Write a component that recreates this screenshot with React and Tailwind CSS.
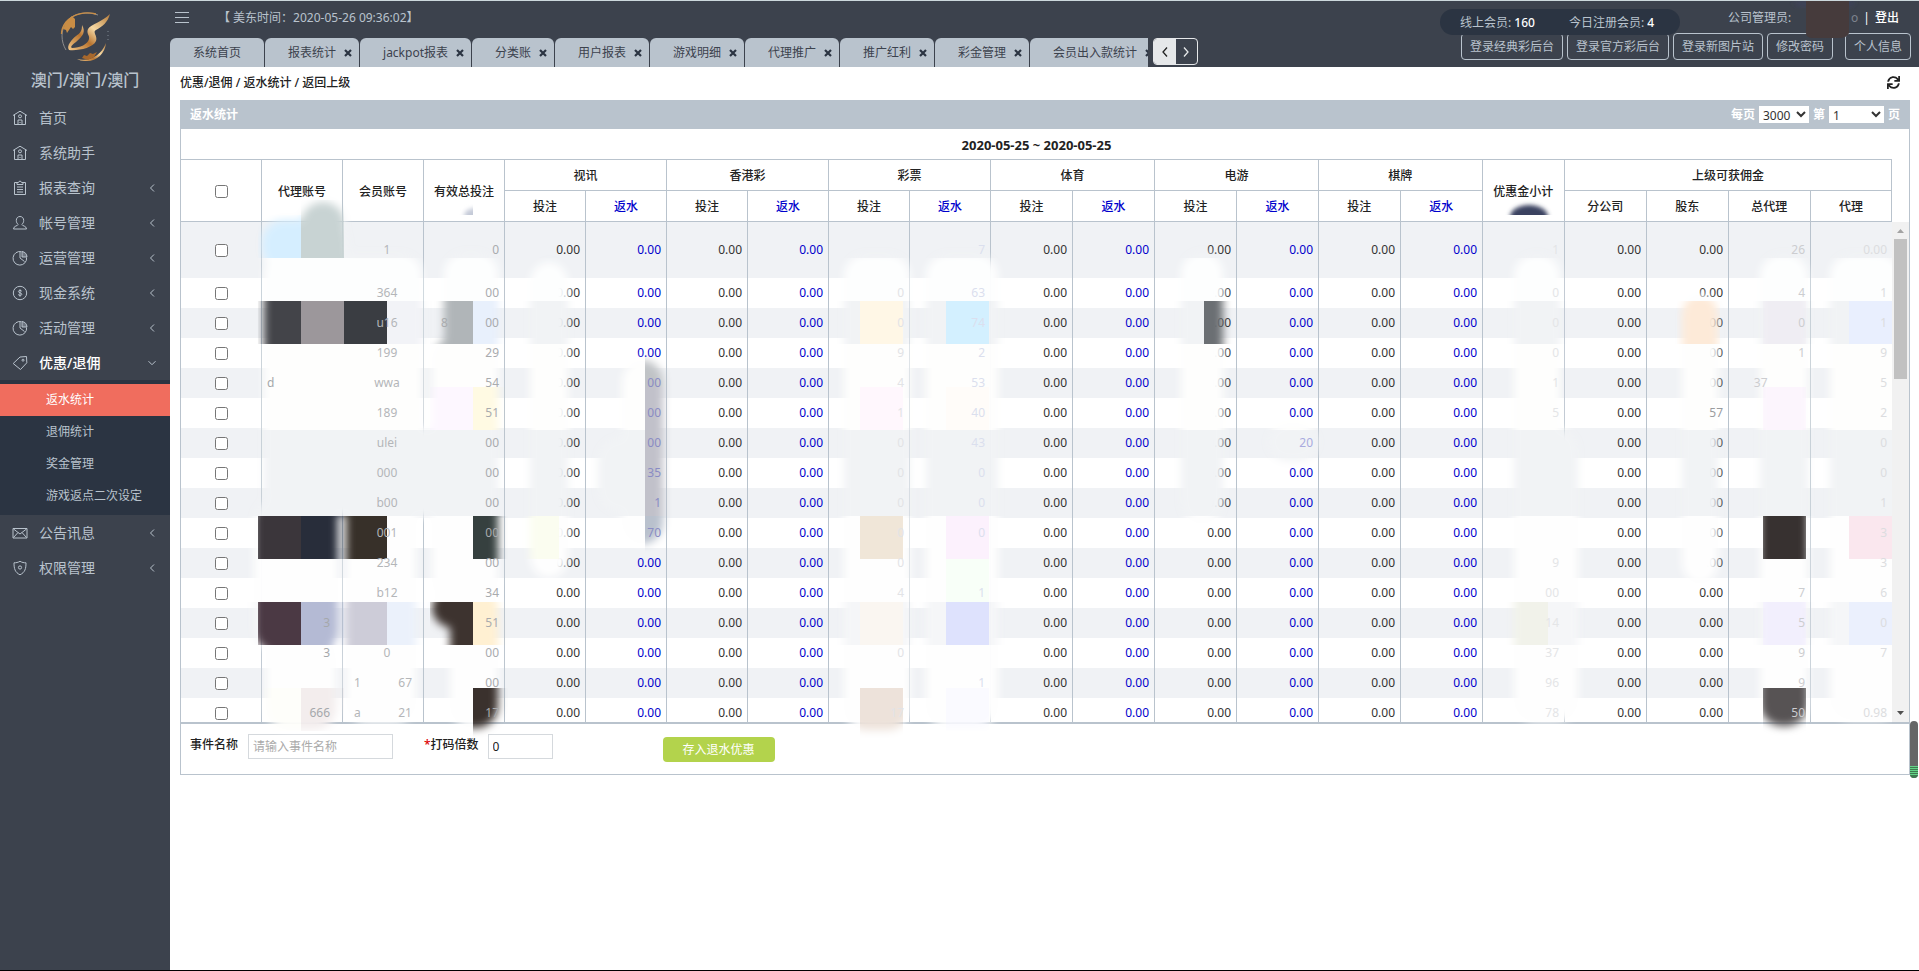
import React from "react";
import { FaSync } from "react-icons/fa";

/* ---------- icons ---------- */
const iconPaths = {
  home: (
    <>
      <path d="M1 5.5 8 1.2l7 4.3" />
      <path d="M2.5 5v9.5h11V5" />
      <circle cx="8" cy="6.3" r="1.5" />
      <path d="M6 14.5V10h4v4.5M8 12v1" />
    </>
  ),
  report: (
    <>
      <path d="M5 2.5H2.5v12h11v-12H11" />
      <path d="M5 4.5v-2h1.5c0-1.8 3-1.8 3 0H11v2z" />
      <path d="M5 7h6M5 9.5h6M5 12h6" />
    </>
  ),
  user: (
    <path d="M8 1.5c-2.3 0-3.7 1.7-3.7 4 0 1.700.8 3.200 1.900 4-.2 1.500-4.700 1.200-4.700 4.500h13c0-3.300-4.500-3-4.700-4.500 1.100-.8 1.900-2.300 1.900-4 0-2.300-1.400-4-3.700-4z" />
  ),
  pie: (
    <>
      <path d="M9.500 1.700A6.800 6.800 0 1 0 14.600 7.500" />
      <path d="M8 2v6l4.500 3.500" />
      <path d="M10 1.500V7h5A6 6 0 0 0 10 1.500z" fill="currentColor" fillOpacity="0.4" />
    </>
  ),
  cash: (
    <>
      <circle cx="8" cy="8" r="6.700" />
      <path d="M9.800 6.300c-.6-1.300-3.400-1.200-3.400.2 0 1.700 3.400 1 3.400 2.800 0 1.500-3 1.500-3.600.2M8 4.300v7.400" />
    </>
  ),
  tag: (
    <>
      <path d="M1.200 8.500 8 2l6.500-.5.3 6.300-6.300 6.700z" />
      <circle cx="11" cy="5.200" r="1" />
    </>
  ),
  mail: (
    <>
      <path d="M1 3.500h14v9.500H1z" />
      <path d="m1.500 4 6.500 5 6.500-5M1.500 12.500l4.500-5M14.500 12.500 10 7.500" />
    </>
  ),
  shield: (
    <>
      <path d="M8 1.300c2 1.200 4 1.500 6 1.500 0 6-1 9.500-6 12-5-2.500-6-6-6-12 2 0 4-.3 6-1.500z" />
      <circle cx="8" cy="7.500" r="1.600" />
    </>
  ),
};

function NavIcon({ name }) {
  return (
    <svg viewBox="0 0 16 16" className="size-4 shrink-0" fill="none" stroke="currentColor" strokeWidth="1" aria-hidden="true">
      {iconPaths[name]}
    </svg>
  );
}

function Chevron({ open }) {
  return (
    <svg viewBox="0 0 8 8" className="ml-auto size-2" fill="none" stroke="currentColor" aria-hidden="true">
      {open ? <path d="m.5 2.200 3.500 3.500 3.500-3.500" /> : <path d="M6 .5 2.500 4 6 7.500" />}
    </svg>
  );
}

function Logo() {
  return (
    <svg viewBox="0 0 50 50" className="mx-auto size-[50px]" aria-hidden="true">
      <defs>
        <linearGradient id="gold" x1="0" y1="1" x2="1" y2="0">
          <stop offset="0" stopColor="#f3c98a" />
          <stop offset="0.35" stopColor="#b8742f" />
          <stop offset="0.6" stopColor="#f6d9a4" />
          <stop offset="1" stopColor="#b57a38" />
        </linearGradient>
      </defs>
      <path d="M38 3C27-1 14 1 7 9 0 18 1 30 6 38" fill="none" stroke="#8d8c8c" strokeWidth="1" />
      <path d="M36 2C25-1 13 2 6 10 3 14 1.500 19 1.500 22" fill="none" stroke="#c98d45" strokeWidth="1.300" />
      <path d="M3 17 6 10l6-6 3 3v8l-2 2-2-2-2 3-2 3-1-3z" fill="#c98d45" />
      <path d="M17 47c12 3 24-3 29-16-1 11-10 19-21 18-3 0-6-1-8-2z" fill="url(#gold)" />
      <path d="m22 46 2-3 3 1 3-3 3 1 4-2-3 5-6 3z" fill="#a8682c" />
      <path
        d="M22 13c4 7 1 11-6 17-4 3-6 5-4 6 8 0 16-4 17-9 1-4-3-5-1-10 3-5 14-7 22-15-2 8-8 13-14 16-4 2 2 6 0 11-3 7-18 10-27 9-3-4 3-11 7-14 5-3 6-6 6-11z"
        fill="url(#gold)"
      />
      <path d="M48 19v12" stroke="#7f8893" strokeWidth="1" strokeDasharray="1 3" />
    </svg>
  );
}

/* ---------- navigation ---------- */
const navTop = [
  { label: "首页", icon: "home" },
  { label: "系统助手", icon: "home" },
  { label: "报表查询", icon: "report", more: true },
  { label: "帐号管理", icon: "user", more: true },
  { label: "运营管理", icon: "pie", more: true },
  { label: "现金系统", icon: "cash", more: true },
  { label: "活动管理", icon: "pie", more: true },
  { label: "优惠/退佣", icon: "tag", more: true, open: true },
];
const navBottom = [
  { label: "公告讯息", icon: "mail", more: true },
  { label: "权限管理", icon: "shield", more: true },
];
const subNav = ["返水统计", "退佣统计", "奖金管理", "游戏返点二次设定"];

function NavItem({ item }) {
  return (
    <a href="#" className="flex h-[35px] items-center gap-[11px] pr-[14px] pl-3 text-sm">
      <NavIcon name={item.icon} />
      <span className={item.open ? "font-medium text-white" : ""}>{item.label}</span>
      {item.more && <Chevron open={item.open} />}
    </a>
  );
}

function Sidebar() {
  return (
    <aside className="w-[170px] shrink-0 bg-[#3c424d] text-[#b9c3cd]">
      <div className="h-[99px] pt-[11px]">
        <Logo />
        <div className="mt-[6px] text-center text-base leading-6 font-medium">澳门/澳门/澳门</div>
      </div>
      <nav>
        {navTop.map((n) => (
          <NavItem key={n.label} item={n} />
        ))}
        <div className="bg-[#2b3442] pt-1 pb-[3px] text-xs">
          {subNav.map((s, i) => (
            <a
              key={s}
              href="#"
              className={"flex h-8 items-center pl-[46px] " + (i === 0 ? "bg-[#f06d5e] text-white" : "")}
            >
              {s}
            </a>
          ))}
        </div>
        {navBottom.map((n) => (
          <NavItem key={n.label} item={n} />
        ))}
      </nav>
    </aside>
  );
}

/* ---------- header ---------- */
const tabs = ["系统首页", "报表统计", "jackpot报表", "分类账", "用户报表", "游戏明细", "代理推广", "推广红利", "彩金管理", "会员出入款统计"];

function Tab({ label, closable }) {
  return (
    <div className="mr-px flex h-[29px] shrink-0 items-center gap-2 rounded-t-md bg-[#b9c3cd] pr-[7px] pl-[23px] text-[#3c424d]">
      <a href="#" className={closable ? "" : "pr-4"}>
        {label}
      </a>
      {closable && (
        <button type="button" aria-label={"关闭" + label}>
          <svg viewBox="0 0 8 8" className="size-2" stroke="#2b3442" strokeWidth="2.200" aria-hidden="true">
            <path d="m1 1 6 6M7 1 1 7" />
          </svg>
        </button>
      )}
    </div>
  );
}

function HeaderButton({ children }) {
  return (
    <button type="button" className="h-[27px] rounded-[4px] border border-[#b9c3cd] px-2">
      {children}
    </button>
  );
}

function Header() {
  return (
    <header className="relative flex h-[66px] justify-between bg-[#3c424d] text-xs text-[#b9c3cd]">
      <div className="flex min-w-0 flex-col justify-between">
        <div className="flex h-[37px] items-center pb-1 pl-[5px]">
          <button type="button" aria-label="菜单" className="mr-[29px]">
            <svg viewBox="0 0 14 13" className="h-[13px] w-[14px]" stroke="currentColor" aria-hidden="true">
              <path d="M0 1.500h14M0 6.500h14M0 11.500h14" />
            </svg>
          </button>
          <span>【 美东时间：2020-05-26 09:36:02】</span>
        </div>
        <div className="flex gap-[5px]">
          <div className="flex w-[978px] overflow-hidden">
            {tabs.map((t, i) => (
              <Tab key={t} label={t} closable={i > 0} />
            ))}
          </div>
          <div className="flex h-[27px] w-[45px] overflow-hidden rounded-[4px] border border-[#e6e8ea]">
            <button type="button" aria-label="向左" className="flex flex-1 items-center justify-center bg-[#e6e8ea] text-[#222]">
              <svg viewBox="0 0 6 10" className="h-[10px] w-[6px]" fill="none" stroke="currentColor" strokeWidth="1.300" aria-hidden="true">
                <path d="M5 .5 1 5l4 4.500" />
              </svg>
            </button>
            <button type="button" aria-label="向右" className="flex flex-1 items-center justify-center text-[#e6e8ea]">
              <svg viewBox="0 0 6 10" className="h-[10px] w-[6px]" fill="none" stroke="currentColor" strokeWidth="1.300" aria-hidden="true">
                <path d="m1 .5 4 4.500-4 4.500" />
              </svg>
            </button>
          </div>
        </div>
      </div>
      <div className="flex flex-col items-end pr-2">
        <div className="flex h-8 items-center gap-[5px] pt-px pr-3">
          <span className="pr-[55px]">公司管理员:</span>
          <span className="text-[#7d838d]">o</span>
          <span className="text-white">|</span>
          <a href="#" className="font-medium text-white">
            登出
          </a>
        </div>
        <div className="flex gap-1">
          <HeaderButton>登录经典彩后台</HeaderButton>
          <HeaderButton>登录官方彩后台</HeaderButton>
          <HeaderButton>登录新图片站</HeaderButton>
          <HeaderButton>修改密码</HeaderButton>
          <span className="w-1" />
          <HeaderButton>个人信息</HeaderButton>
        </div>
      </div>
      <div className="absolute top-2 right-[239px] flex h-[26px] w-60 items-center gap-[34px] rounded-full bg-[#2b3442] pt-[2px] pl-5">
        <span>
          线上会员: <b className="font-medium text-white">160</b>
        </span>
        <span>
          今日注册会员: <b className="font-medium text-white">4</b>
        </span>
      </div>
      <svg className="absolute top-0 right-[60px] h-10 w-[70px]" viewBox="0 0 70 40" aria-hidden="true">
        <defs>
          <filter id="soft" x="-20%" y="-20%" width="140%" height="140%">
            <feGaussianBlur stdDeviation="2" />
          </filter>
        </defs>
        <path d="M3 0h64l-5 6H10z" fill="#3d4258" filter="url(#soft)" />
        <path d="M17 0h43v32q-2 5-10 5H24q-7 0-7-5z" fill="#463b3c" />
      </svg>
    </header>
  );
}

/* ---------- table ---------- */
const games = ["视讯", "香港彩", "彩票", "体育", "电游", "棋牌"];
const blueCols = [5, 7, 9, 11, 13, 15];

/* Values that differ from 0.00, by column */
const gap = "\u00a0".repeat(12);
const columns = {
  1: ["", "", "", "", "d", "", "", "", "", "", "", "", "3", "3", "", "666"],
  2: ["1", "364", "u16", "199", "wwa", "189", "ulei", "000", "b00", "001", "234", "b12", "", "0", "1" + gap + "67", "a" + gap + "21"],
  3: ["0", "00", "8" + gap + "00", "29", "54", "51", "00", "00", "00", "00", "00", "34", "51", "00", "00", "17"],
  5: [, , , , "00", "00", "00", "35", "1", "70"],
  8: ["", "0", "0", "9", "4", "1", "0", "0", "0", "0", "0", "4", "", "0", "", "17"],
  9: ["7", "63", "74", "2", "53", "40", "43", "0", "0", "0", "", "1", "", "", "1", ""],
  13: [, , , , , , "20"],
  16: ["1", "0", "0", "0", "1", "5", "", "", "", "", "9", "00", "14", "37", "96", "78"],
  18: [, , , , , "57"],
  19: ["26", "4", "0", "1", "37" + gap, "", "", "", "", "", "", "7", "5", "9", "9", "50"],
  20: ["0.00", "1", "1", "9", "5", "2", "0", "0", "1", "3", "3", "6", "0", "7", "", "0.98"],
};
const fragmentTone = {
  1: "text-[#a5a8ab]",
  2: "text-[#b4b6b9]",
  3: "text-[#a9abae]",
  5: "text-[#8a8cc4]",
  8: "text-[#e2e3e6]",
  9: "text-[#dbdfee]",
  13: "text-[#a9abdf]",
  16: "text-[#e4e5e7]",
  18: "text-[#9a9c9f]",
  19: "text-[#cccdd0]",
  20: "text-[#dcdde0]",
};

function cellAlign(row, col) {
  if (col === 1) return row > 10 ? "pr-3 text-right" : "pl-[5px] text-left";
  if (col === 2) return row < 14 ? "pl-2 text-center" : "text-center";
  return "px-[5px] text-right";
}

function Cols() {
  return (
    <colgroup>
      {Array.from({ length: 21 }, (_, i) => (
        <col key={i} className={i < 10 || i === 20 ? "w-[81px]" : ""} />
      ))}
    </colgroup>
  );
}

const thBase = "border-r border-b border-[#b9c3cd] px-0 pt-[2px] pb-0 font-medium";

function HeadTable() {
  return (
    <table className="w-full table-fixed border-separate border-spacing-0 text-center text-[#222]">
      <Cols />
      <thead>
        <tr className="h-[31px]">
          <th colSpan={21} className="border-b border-[#b9c3cd] px-0 pt-[2px] pb-0 text-[13px] leading-4 font-bold">
            2020-05-25 ~ 2020-05-25
          </th>
        </tr>
        <tr className="h-[31px]">
          <th rowSpan={2} className={thBase}>
            <input type="checkbox" aria-label="全选" className="mx-auto block size-[13px]" />
          </th>
          <th rowSpan={2} className={thBase}>代理账号</th>
          <th rowSpan={2} className={thBase}>会员账号</th>
          <th rowSpan={2} className={thBase}>有效总投注</th>
          {games.map((g) => (
            <th key={g} colSpan={2} className={thBase}>{g}</th>
          ))}
          <th rowSpan={2} className={thBase}>优惠金小计</th>
          <th colSpan={4} className={thBase}>上级可获佣金</th>
        </tr>
        <tr className="h-[31px]">
          {games.map((g) => (
            <React.Fragment key={g}>
              <th className={thBase}>投注</th>
              <th className={thBase + " text-[#0000cc]"}>返水</th>
            </React.Fragment>
          ))}
          {["分公司", "股东", "总代理", "代理"].map((t) => (
            <th key={t} className={thBase}>{t}</th>
          ))}
        </tr>
      </thead>
    </table>
  );
}

function BodyCell({ row, col }) {
  const own = columns[col] ? columns[col][row] : undefined;
  const tone = blueCols.includes(col) ? "text-[#0000cc]" : "text-[#333]";
  return (
    <td className={"border-r border-[#b9c3cd] py-0 whitespace-nowrap last:border-r-0 " + cellAlign(row, col) + " " + tone}>
      {own === undefined ? "0.00" : <span className={"relative z-10 " + fragmentTone[col]}>{own}</span>}
    </td>
  );
}

function BodyTable() {
  return (
    <table className="w-full table-fixed border-separate border-spacing-0">
      <Cols />
      <tbody>
        {Array.from({ length: 16 }, (_, r) => (
          <tr key={r} className={(r === 0 ? "h-14" : "h-[30px]") + (r % 2 === 0 ? " bg-[#f0f2f5]" : " bg-white")}>
            <td className="border-r border-[#b9c3cd] p-0">
              <input type="checkbox" aria-label={"选择第" + (r + 1) + "行"} className="mx-auto block size-[13px]" />
            </td>
            {Array.from({ length: 20 }, (_, c) => (
              <BodyCell key={c} row={r} col={c + 1} />
            ))}
          </tr>
        ))}
      </tbody>
    </table>
  );
}

/* Painted-over mosaic: soft brush strokes reveal 43px blocks */
const strokes = [
  [264, 222, 82, 46], [303, 204, 40, 60], [266, 255, 154, 258], [256, 500, 80, 150], [268, 640, 66, 88],
  [348, 500, 66, 222], [400, 430, 60, 85], [446, 254, 50, 120], [434, 340, 62, 260], [434, 590, 62, 36],
  [452, 600, 44, 126], [532, 264, 34, 312], [600, 440, 60, 70], [624, 362, 37, 180],
  [846, 256, 62, 472], [928, 256, 68, 470], [1183, 254, 38, 268], [1270, 425, 46, 34],
  [1516, 256, 42, 250], [1516, 430, 60, 290], [1684, 296, 32, 286], [1762, 256, 44, 468],
  [1832, 256, 66, 462],
];
const bands = [
  [172, 86, "#f1f3f5"], [258, 43, "#fdfefe"], [301, 43, "#f1f3f5"], [344, 86, "#fefefd"], [430, 86, "#f1f3f5"],
  [516, 86, "#fefefe"], [602, 43, "#f5f6f8"], [645, 95, "#fefefe"],
];
const blocks = [
  [258, 215, "#d5eeff"], [301, 200, "#c8d3d3", 58],
  [258, 301, "#434449"], [301, 301, "#9c979b"], [344, 301, "#3a3d42"], [387, 301, "#f2f3f7"], [430, 301, "#b0b5b8"], [473, 301, "#e8f0fc"],
  [430, 387, "#fdf7ff"], [473, 387, "#fffae3"],
  [258, 516, "#3b363b"], [301, 516, "#282d3a"], [344, 516, "#373029"], [473, 516, "#36403f"], [516, 516, "#fbfdf0"],
  [258, 602, "#4b3944"], [301, 602, "#b4bad4"], [344, 602, "#cdccd8"], [387, 602, "#ebf1fb"], [430, 602, "#3d332f"], [473, 602, "#fff0d2"],
  [258, 688, "#fefefa"], [301, 688, "#f3eded"], [473, 688, "#3a312d", 50],
  [645, 344, "#c0c3c6"], [645, 387, "#c1c1ca", 129], [645, 516, "#b9c1cd"],
  [860, 301, "#fff7e6"], [860, 387, "#fff7fd"], [860, 516, "#f0e6d8"], [860, 602, "#faf6f1"], [860, 688, "#ede2da", 50],
  [946, 301, "#d3f0ff"], [946, 387, "#fffcf9"], [946, 516, "#fcf1fd"], [946, 559, "#f8fff8"], [946, 602, "#dee2fd"], [946, 688, "#fafaff"],
  [1204, 301, "#6b6f73"], [1505, 602, "#f1f2ea"], [1677, 301, "#fdead8"],
  [1763, 301, "#efedf3"], [1763, 387, "#fcf5fd"], [1763, 516, "#373130"], [1763, 602, "#f2effd"], [1763, 688, "#575354", 50],
  [1849, 301, "#e9effe"], [1849, 516, "#fae7ee"], [1849, 602, "#ebf0fd"],
];

function Mosaic() {
  return (
    <svg
      className="pointer-events-none absolute top-0 left-0 h-[646px] w-[1711px]"
      viewBox="181 129 1711 646"
      aria-hidden="true"
    >
      <defs>
        <filter id="brush" filterUnits="userSpaceOnUse" x="181" y="129" width="1740" height="646">
          <feGaussianBlur stdDeviation="4" />
        </filter>
        <mask id="strokes" maskUnits="userSpaceOnUse" x="181" y="129" width="1740" height="646">
          <g filter="url(#brush)" fill="#fff">
            {strokes.map(([x, y, w, h], i) => (
              <rect key={i} x={x - 2} y={y - 2} width={w + 4} height={h + 4} rx="22" />
            ))}
          </g>
        </mask>
      </defs>
      <g mask="url(#strokes)">
        {bands.map(([y, h, c]) => (
          <rect key={y} x="181" y={y} width="1711" height={h} fill={c} />
        ))}
        {blocks.map(([x, y, c, h], i) => (
          <rect key={i} x={x} y={y} width="43" height={h || 43} fill={c} />
        ))}
      </g>
      <svg x="1500" y="195" width="60" height="20" viewBox="0 0 60 20">
        <ellipse cx="29" cy="22" rx="19" ry="12" fill="#3b4260" filter="url(#soft)" />
      </svg>
      <svg x="456" y="200" width="17" height="15" viewBox="0 0 17 15">
        <ellipse cx="20" cy="16" rx="12" ry="8" fill="#c5cad8" filter="url(#soft)" />
      </svg>
    </svg>
  );
}

function ScrollTrack() {
  return (
    <div className="flex w-[17px] shrink-0 flex-col items-center bg-[#f1f1f1]">
      <svg viewBox="0 0 17 17" className="size-[17px]" fill="#a3a3a3" aria-hidden="true">
        <path d="m5 11 3.500-4 3.500 4z" />
      </svg>
      <div className="h-[140px] w-[13px] bg-[#c1c1c1]" />
      <svg viewBox="0 0 17 17" className="mt-auto size-[17px]" fill="#505050" aria-hidden="true">
        <path d="m5 6 3.500 4L12 6z" />
      </svg>
    </div>
  );
}

function Panel() {
  return (
    <section className="mr-[9px] ml-[10px] border border-t-0 border-[#b9c3cd] text-xs">
      <div className="-mx-px flex h-[29px] items-center justify-between bg-[#b9c3cd] px-[10px] font-bold text-white">
        <h2>返水统计</h2>
        <div className="flex items-center gap-1">
          <label htmlFor="size">每页</label>
          <select id="size" className="h-[17px] w-[50px] bg-white font-normal text-[#333]">
            <option>3000</option>
          </select>
          <label htmlFor="page">第</label>
          <select id="page" className="h-[17px] w-[55px] bg-white font-normal text-[#333]">
            <option>1</option>
          </select>
          <span>页</span>
        </div>
      </div>
      <div className="relative">
        <div className="pr-[17px]">
          <HeadTable />
        </div>
        <div className="flex h-[500px] overflow-hidden">
          <div className="min-w-0 flex-1">
            <BodyTable />
          </div>
          <ScrollTrack />
        </div>
        <div className="h-[2px] bg-[#b9c3cd]" />
        <Mosaic />
      </div>
      <form className="flex h-[50px] items-start pt-[10px] pl-[9px] text-[#222]">
        <label htmlFor="event" className="mr-[10px] leading-[22px] font-medium">事件名称</label>
        <input
          id="event"
          placeholder="请输入事件名称"
          className="mr-[31px] h-[25px] w-[145px] border border-[#d5d9dd] px-1 placeholder:text-[#aaa]"
        />
        <label htmlFor="times" className="mr-[9px] leading-[22px] font-medium">
          <span className="text-[#d00]">*</span>打码倍数
        </label>
        <input id="times" defaultValue="0" className="h-[25px] w-[65px] border border-[#d5d9dd] px-1" />
        <button type="button" className="mt-[3px] ml-[110px] h-[25px] w-28 rounded-[4px] bg-[#b3d34c] text-white">
          存入退水优惠
        </button>
      </form>
    </section>
  );
}

export default function App() {
  return (
    <div className="relative flex min-h-screen border-t border-b border-t-[#ccd8dc] border-b-black bg-white font-['Noto_Sans','Noto_Sans_CJK_SC',sans-serif]">
      <Sidebar />
      <main className="min-w-0 flex-1">
        <Header />
        <div className="flex h-[33px] items-center justify-between pr-[19px] pb-[2px] pl-[10px] text-xs font-medium text-[#222]">
          <div>优惠/退佣 / 返水统计 / 返回上级</div>
          <button type="button" aria-label="刷新">
            <FaSync className="size-[13px]" />
          </button>
        </div>
        <Panel />
      </main>
      <div className="absolute top-[720px] right-px flex h-[57px] w-2 flex-col justify-end overflow-hidden rounded-full bg-[#666]">
        <div className="flex h-3 flex-col gap-px bg-[#3f7a50]">
          <span className="h-px bg-[#63d487]" />
          <span className="h-px bg-[#63d487]" />
          <span className="h-px bg-[#63d487]" />
          <span className="h-px bg-[#63d487]" />
          <span className="h-px bg-[#63d487]" />
        </div>
      </div>
    </div>
  );
}
